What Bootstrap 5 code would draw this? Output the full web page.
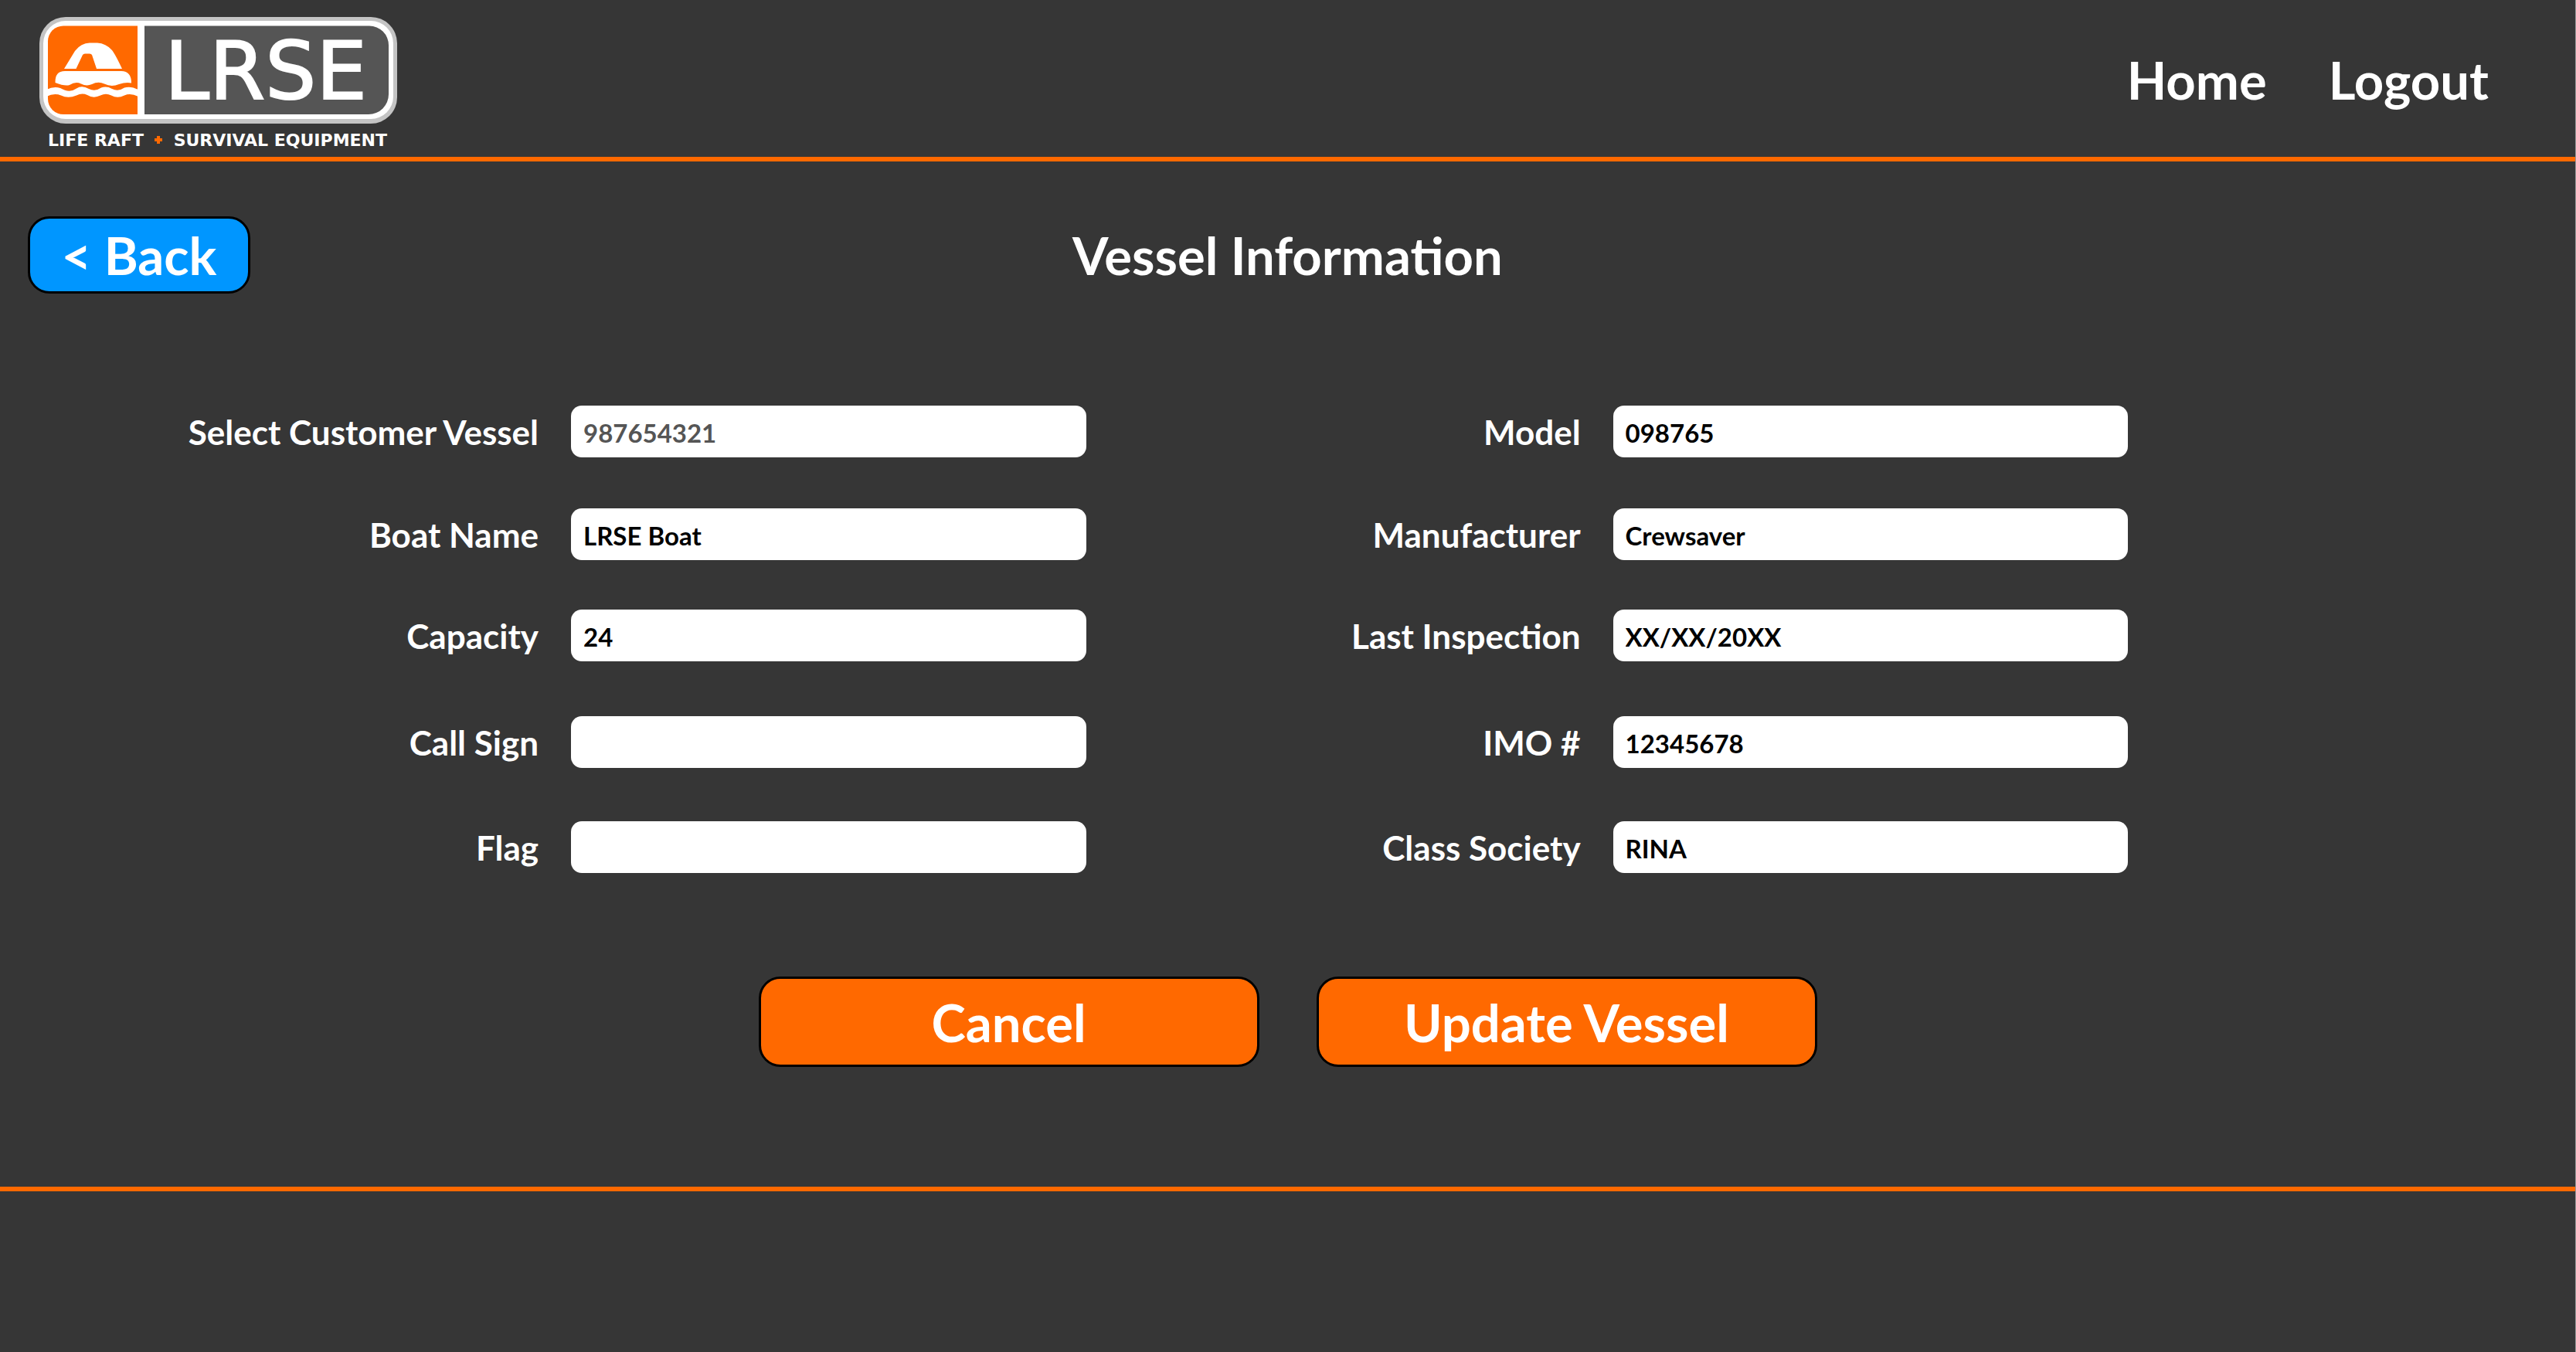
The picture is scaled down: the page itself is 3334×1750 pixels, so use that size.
<!DOCTYPE html>
<html lang="en">
<head>
<meta charset="utf-8">
<meta name="viewport" content="width=device-width, initial-scale=1">
<title>Vessel Information</title>
<link href="https://cdn.jsdelivr.net/npm/bootstrap@5.3.0/dist/css/bootstrap.min.css" rel="stylesheet">
<style>
  body { background: #363636; color: #fff; font-family: Lato, sans-serif; font-weight: 700; border-right: 1px solid #999; }
  .site-header { border-bottom: 6px solid #ff6900; padding: 0 112px 0 50px; height: 209px; }
  .site-header .nav { gap: 80px; padding-top: 61px; }
  .site-header .nav-link, .page-title, .action { font-size: 67px; line-height: 84px; font-weight: 700; color: #fff; }
  .logo { width: 466px; height: 184px; }
  .page-head { display: grid; grid-template-columns: 1fr auto 1fr; padding: 71px 36px 0; }
  .action { border: 3px solid #000; border-radius: 28px; padding: 0; }
  .action:hover { color: #fff; border-color: #000; }
  .action-back { background: #0096ff; width: 288px; height: 100px; }
  .action-main { background: #ff6900; width: 648px; height: 117px; line-height: 110px; }
  .vessel-form { padding-top: 145px; }
  .fields { display: grid; grid-template-columns: 697px 20% 598px 20%; column-gap: 42px; grid-template-rows: 133px 131px 138px 136px 67px; }
  .fields label { font-size: 44px; line-height: 68px; text-align: right; }
  .fields .form-control { height: 67px; border: 0; border-radius: 14px; padding: 3px 16px 0; font-size: 33px; font-weight: 700; color: #000; background: #fff; }
  .fields .form-control::placeholder { color: #555; opacity: 1; }
  .actions { gap: 74px; padding: 134px 0 155px; }
  .site-footer { border-top: 6px solid #ff6900; min-height: 208px; }
</style>
</head>
<body class="d-flex flex-column min-vh-100">
<header class="site-header d-flex align-items-start justify-content-between">
  <a href="#" class="d-block pt-3" aria-label="LRSE home">
    <svg class="logo d-block" viewBox="50 16 466 184" role="img" aria-label="LRSE Life Raft + Survival Equipment">
      <rect x="51" y="22" width="463" height="138" rx="34" fill="#c4c4c4"/>
      <rect x="56" y="27" width="453" height="127" rx="29" fill="#fff"/>
      <path d="M178 33.500V148H82a20 20 0 0 1-20-20V53.500a20 20 0 0 1 20-20z" fill="#ff6900"/>
      <path d="M187 33.500H478a25 25 0 0 1 25 25V122a26 26 0 0 1-26 26H187z" fill="#555"/>
      <path d="M83 89L97 66Q105 55.500 116 55.500H126Q137 56 145 65Q149 70 158 89H125L119 71Q118 69.500 116 69.500H110Q108 69.500 107 71L98.500 89z" fill="#fff"/>
      <path d="M71.500 107Q71 92 84 92H157Q170 92 170 107.500Q163 106 154 109Q144 113 135 108.500Q127 105 119 109Q112 112 105 108.500Q98 105 90 110Q84 112 71.500 107z" fill="#fff"/>
      <path d="M60 116Q70 111 78 114Q90 121 99 114.500Q106 110 115 115Q123 119 131 113.500Q138 111 145 115Q153 119 161 113.500Q169 111 179 116V125Q169 120 161 123.500Q152 128 144 123.500Q137 120 130 123.500Q121 128 113 123Q106 120 99 123.500Q88 128 79 123.500Q70 120 60 125z" fill="#fff"/>
      <text x="344" y="128" font-family="DejaVu Sans, sans-serif" font-size="104" font-weight="400" text-anchor="middle" fill="#fff" stroke="#fff" stroke-width="2">LRSE</text>
      <g font-family="DejaVu Sans, sans-serif" font-size="22" font-weight="700">
        <text x="62" y="189" fill="#fff">LIFE RAFT</text>
        <path d="M200 181H210M205 176V186" stroke="#ff6900" stroke-width="4"/>
        <text x="501" y="189" fill="#fff" text-anchor="end">SURVIVAL EQUIPMENT</text>
      </g>
    </svg>
  </a>
  <nav class="nav" aria-label="Main">
    <a class="nav-link p-0" href="#">Home</a>
    <a class="nav-link p-0" href="#">Logout</a>
  </nav>
</header>

<main>
  <div class="page-head align-items-center">
    <div><button type="button" class="btn action action-back">&lt; Back</button></div>
    <h1 class="page-title m-0">Vessel Information</h1>
  </div>

  <form class="vessel-form">
    <div class="fields">
      <label for="customer">Select Customer Vessel</label>
      <input id="customer" class="form-control" type="text" placeholder="987654321">
      <label for="model">Model</label>
      <input id="model" class="form-control" type="text" value="098765">

      <label for="boat">Boat Name</label>
      <input id="boat" class="form-control" type="text" value="LRSE Boat">
      <label for="maker">Manufacturer</label>
      <input id="maker" class="form-control" type="text" value="Crewsaver">

      <label for="capacity">Capacity</label>
      <input id="capacity" class="form-control" type="text" value="24">
      <label for="inspection">Last Inspection</label>
      <input id="inspection" class="form-control" type="text" value="XX/XX/20XX">

      <label for="callsign">Call Sign</label>
      <input id="callsign" class="form-control" type="text">
      <label for="imo">IMO #</label>
      <input id="imo" class="form-control" type="text" value="12345678">

      <label for="flag">Flag</label>
      <input id="flag" class="form-control" type="text">
      <label for="society">Class Society</label>
      <input id="society" class="form-control" type="text" value="RINA">
    </div>
    <div class="actions d-flex justify-content-center">
      <button type="button" class="btn action action-main">Cancel</button>
      <button type="submit" class="btn action action-main">Update Vessel</button>
    </div>
  </form>
</main>

<footer class="site-footer flex-grow-1"></footer>
<script src="https://cdn.jsdelivr.net/npm/bootstrap@5.3.0/dist/js/bootstrap.bundle.min.js"></script>
</body>
</html>
